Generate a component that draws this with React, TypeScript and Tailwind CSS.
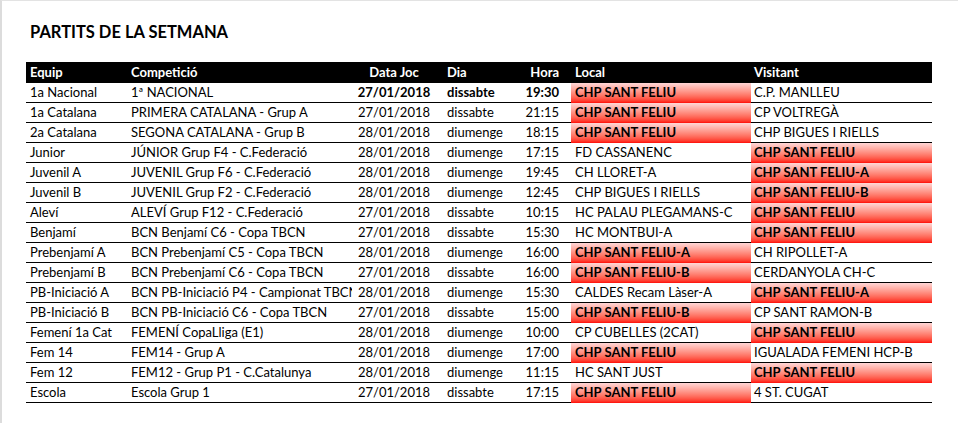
import React from "react";

type Match = {
  equip: string;
  comp: string;
  data: string;
  dia: string;
  hora: string;
  local: string;
  visitant: string;
  home: boolean; // true -> local is ours (red), false -> visitant is red
  bold?: boolean;
};

const matches: Match[] = [
  { equip: "1a Nacional", comp: "1ª NACIONAL", data: "27/01/2018", dia: "dissabte", hora: "19:30", local: "CHP SANT FELIU", visitant: "C.P. MANLLEU", home: true, bold: true },
  { equip: "1a Catalana", comp: "PRIMERA CATALANA - Grup A", data: "27/01/2018", dia: "dissabte", hora: "21:15", local: "CHP SANT FELIU", visitant: "CP VOLTREGÀ", home: true },
  { equip: "2a Catalana", comp: "SEGONA CATALANA - Grup B", data: "28/01/2018", dia: "diumenge", hora: "18:15", local: "CHP SANT FELIU", visitant: "CHP BIGUES I RIELLS", home: true },
  { equip: "Junior", comp: "JÚNIOR Grup F4 - C.Federació", data: "28/01/2018", dia: "diumenge", hora: "17:15", local: "FD CASSANENC", visitant: "CHP SANT FELIU", home: false },
  { equip: "Juvenil A", comp: "JUVENIL Grup F6 - C.Federació", data: "28/01/2018", dia: "diumenge", hora: "19:45", local: "CH LLORET-A", visitant: "CHP SANT FELIU-A", home: false },
  { equip: "Juvenil B", comp: "JUVENIL Grup F2 - C.Federació", data: "28/01/2018", dia: "diumenge", hora: "12:45", local: "CHP BIGUES I RIELLS", visitant: "CHP SANT FELIU-B", home: false },
  { equip: "Aleví", comp: "ALEVÍ Grup F12 - C.Federació", data: "27/01/2018", dia: "dissabte", hora: "10:15", local: "HC PALAU PLEGAMANS-C", visitant: "CHP SANT FELIU", home: false },
  { equip: "Benjamí", comp: "BCN Benjamí C6 - Copa TBCN", data: "27/01/2018", dia: "dissabte", hora: "15:30", local: "HC MONTBUI-A", visitant: "CHP SANT FELIU", home: false },
  { equip: "Prebenjamí A", comp: "BCN Prebenjamí C5 - Copa TBCN", data: "28/01/2018", dia: "diumenge", hora: "16:00", local: "CHP SANT FELIU-A", visitant: "CH RIPOLLET-A", home: true },
  { equip: "Prebenjamí B", comp: "BCN Prebenjamí C6 - Copa TBCN", data: "27/01/2018", dia: "dissabte", hora: "16:00", local: "CHP SANT FELIU-B", visitant: "CERDANYOLA CH-C", home: true },
  { equip: "PB-Iniciació A", comp: "BCN PB-Iniciació P4 - Campionat TBCN", data: "28/01/2018", dia: "diumenge", hora: "15:30", local: "CALDES Recam Làser-A", visitant: "CHP SANT FELIU-A", home: false },
  { equip: "PB-Iniciació B", comp: "BCN PB-Iniciació C6 - Copa TBCN", data: "27/01/2018", dia: "dissabte", hora: "15:00", local: "CHP SANT FELIU-B", visitant: "CP SANT RAMON-B", home: true },
  { equip: "Femení 1a Cat", comp: "FEMENÍ CopaLliga (E1)", data: "28/01/2018", dia: "diumenge", hora: "10:00", local: "CP CUBELLES (2CAT)", visitant: "CHP SANT FELIU", home: false },
  { equip: "Fem 14", comp: "FEM14 - Grup A", data: "28/01/2018", dia: "diumenge", hora: "17:00", local: "CHP SANT FELIU", visitant: "IGUALADA FEMENI HCP-B", home: true },
  { equip: "Fem 12", comp: "FEM12 - Grup P1 - C.Catalunya", data: "28/01/2018", dia: "diumenge", hora: "11:15", local: "HC SANT JUST", visitant: "CHP SANT FELIU", home: false },
  { equip: "Escola", comp: "Escola Grup 1", data: "27/01/2018", dia: "dissabte", hora: "17:15", local: "CHP SANT FELIU", visitant: "4 ST. CUGAT", home: true },
];

const cell = "h-[20px] border-b border-black flex items-center whitespace-nowrap";
const red = "h-[20px] flex items-center whitespace-nowrap bg-gradient-to-b from-[#ffd6d6] to-[#ff0000] font-bold";

export default function App() {
  return (
    <div
      className="w-[958px] h-[423px] bg-white border-t border-t-[#e3e3e3] border-l-2 border-l-[#dcdcdc] text-black text-[13px]"
      style={{ fontFamily: "Lato, 'Noto Sans', sans-serif" }}
    >
      <div className="pl-[28px] pt-[21px] h-[20px] box-content leading-[20px] text-[16.5px] font-bold">
        PARTITS DE LA SETMANA
      </div>

      <div className="ml-[24px] mt-[20px] w-[906px]">
        <div className="flex h-[21px] items-center bg-black text-white font-bold">
          <div className="w-[101px] pl-[4px]">Equip</div>
          <div className="w-[228px] pl-[4px]">Competició</div>
          <div className="w-[78px] text-center">Data Joc</div>
          <div className="w-[78px] pl-[14px]">Dia</div>
          <div className="w-[60px] pr-[12px] text-right">Hora</div>
          <div className="w-[180px] pl-[4px]">Local</div>
          <div className="w-[181px] pl-[3px]">Visitant</div>
        </div>

        {matches.map((m, i) => (
          <div key={i} className="flex">
            <div className={`${cell} w-[101px] pl-[4px]`}>{m.equip}</div>
            <div className={`${cell} w-[228px] pl-[4px] pr-[3px]`}>
              <span className="block w-full overflow-hidden">{m.comp}</span>
            </div>
            <div className={`${cell} w-[78px] justify-center ${m.bold ? "font-bold" : ""}`}>{m.data}</div>
            <div className={`${cell} w-[78px] pl-[14px] ${m.bold ? "font-bold" : ""}`}>{m.dia}</div>
            <div className={`${cell} w-[60px] pr-[12px] justify-end ${m.bold ? "font-bold" : ""}`}>{m.hora}</div>
            <div className={`${m.home ? red : cell} w-[180px] pl-[4px]`}>{m.local}</div>
            <div className={`${m.home ? cell : red} w-[181px] pl-[3px]`}>{m.visitant}</div>
          </div>
        ))}
      </div>
    </div>
  );
}
